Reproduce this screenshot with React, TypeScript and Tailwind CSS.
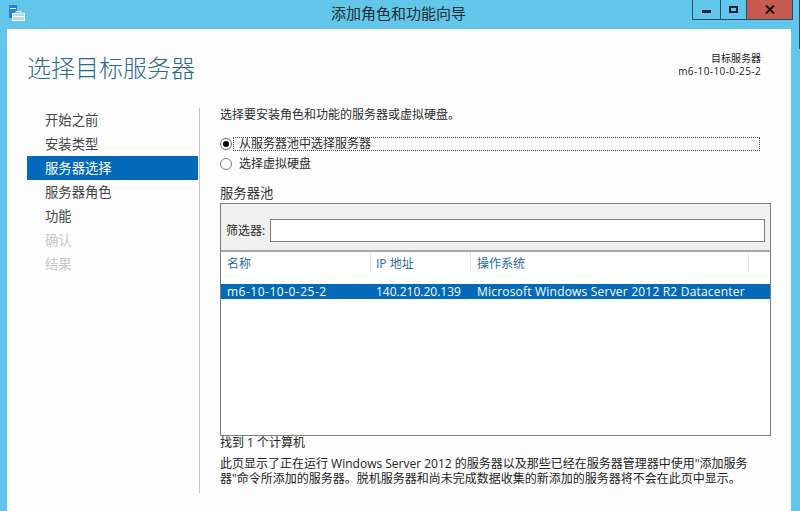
import React from 'react';

const font = { fontFamily: '"Open Sans", "Noto Sans CJK SC", sans-serif' };

const steps = [
  { label: '开始之前', state: 'normal' },
  { label: '安装类型', state: 'normal' },
  { label: '服务器选择', state: 'active' },
  { label: '服务器角色', state: 'normal' },
  { label: '功能', state: 'normal' },
  { label: '确认', state: 'disabled' },
  { label: '结果', state: 'disabled' },
];

const AppIcon = () => (
  <svg width="17" height="17" viewBox="0 0 17 17" fill="none" className="ml-[9px] mt-[5px]">
    <rect x="0.5" y="0.5" width="7" height="12" fill="#2a7fd0" stroke="#2a7fd0" />
    <rect x="1" y="3" width="6" height="1" fill="#e6f6fc" />
    <rect x="3.5" y="8.5" width="12" height="7" fill="#a9dcf0" stroke="#fff" />
    <path d="M7 8.5V6.5H12V8.5M4 11.5H15" stroke="#fff" />
  </svg>
);

const App: React.FC = () => {
  return (
    <div className="relative w-[800px] h-[511px] overflow-hidden bg-[#62c6ea] flex flex-col text-[12px] text-[#2b2b2b]" style={font}>
      <div className="absolute right-0 top-0 w-px h-[49px] bg-[#2a4f60]" />

      {/* title bar */}
      <div className="h-[29px] flex shrink-0">
        <div className="w-[331px]">
          <AppIcon />
        </div>
        <div className="w-[361px] pt-[3px] text-[15px] leading-[20px] text-[#1c2a30]">添加角色和功能向导</div>
        <div className="flex h-[20px] border border-t-0 border-[#1d4f66]">
          <div className="w-[28px] flex items-center justify-center border-r border-[#1d4f66]">
            <div className="w-[9px] h-[3px] bg-[#06222e] mt-[3px]" />
          </div>
          <div className="w-[26px] flex items-center justify-center border-r border-[#1d4f66]">
            <div className="w-[9px] h-[7px] border-2 border-[#06222e]" />
          </div>
          <div className="w-[45px] bg-[#c75a50] flex items-center justify-center">
            <svg width="10" height="9" viewBox="0 0 10 9">
              <path d="M1 0.5L9 8.5M9 0.5L1 8.5" stroke="#1e0d0b" strokeWidth="2" />
            </svg>
          </div>
        </div>
      </div>

      {/* client area */}
      <div className="flex-1 ml-[7px] mr-[9px] bg-[#fdfdfd] flex flex-col">
        <div className="h-[79px] flex justify-between shrink-0">
          <div className="pl-[20px] pt-[22px] text-[24px] leading-[34px] font-light text-[#2b6a8f]">选择目标服务器</div>
          <div className="pr-[30px] pt-[23px] text-right text-[10px] leading-[13px] text-[#222]">
            <div>目标服务器</div>
            <div className="tracking-[0.4px]">m6-10-10-0-25-2</div>
          </div>
        </div>

        <div className="flex flex-1">
          {/* steps */}
          <div className="w-[192px] shrink-0 pl-[20px] flex flex-col">
            {steps.map((step) => (
              <div
                key={step.label}
                className={
                  step.state === 'active'
                    ? 'h-[24px] w-[171px] pl-[18px] leading-[24px] text-[13.33px] bg-[#0369b8] text-white'
                    : step.state === 'disabled'
                      ? 'h-[24px] pl-[18px] leading-[24px] text-[13.33px] text-[#c8c8c8]'
                      : 'h-[24px] pl-[18px] leading-[24px] text-[13.33px] text-[#444]'
                }
              >
                {step.label}
              </div>
            ))}
          </div>

          {/* main */}
          <div className="w-[572px] mb-[18px] border-l border-[#c4c4c4] pl-[20px] flex flex-col">
            <div className="h-[13px] leading-[13px]">选择要安装角色和功能的服务器或虚拟硬盘。</div>

            <div className="mt-[16px] flex items-center h-[14px]">
              <span className="w-[12px] h-[12px] rounded-full border border-[#6a6a6a] bg-white flex items-center justify-center shrink-0">
                <span className="w-[6px] h-[6px] rounded-full bg-black" />
              </span>
              <div className="ml-[1px] w-[527px] h-[14px] pl-[5px] leading-[12px] border border-dotted border-[#444]">从服务器池中选择服务器</div>
            </div>
            <div className="mt-[6px] flex items-center h-[14px]">
              <span className="w-[12px] h-[12px] rounded-full border border-[#7a7a7a] bg-white shrink-0" />
              <div className="ml-[7px] leading-[14px]">选择虚拟硬盘</div>
            </div>

            <div className="mt-[13px] h-[19px] leading-[18px] text-[13.33px] text-[#333]">服务器池</div>

            <div className="w-[551px] h-[233px] border border-[#7d7d7d] bg-white flex flex-col">
              <div className="h-[48px] bg-[#f0f0f0] border-b-2 border-[#a8a8a8] flex items-start pt-[15px] pl-[5px] shrink-0">
                <span className="w-[44px] leading-[23px] text-[12px]">筛选器:</span>
                <div className="w-[495px] h-[23px] bg-white border border-[#7d7d7d]" />
              </div>
              <div className="h-[32px] flex text-[#2b6a9c] shrink-0">
                <div className="w-[150px] h-[20px] pl-[6px] leading-[24px] border-r border-[#e4e4e4]">名称</div>
                <div className="w-[100px] h-[20px] pl-[5px] leading-[24px] border-r border-[#e4e4e4]">IP 地址</div>
                <div className="w-[278px] h-[20px] pl-[6px] leading-[24px] border-r border-[#e4e4e4]">操作系统</div>
              </div>
              <div className="h-[15px] flex items-center bg-[#0369b8] text-white text-[12px] leading-[15px] whitespace-nowrap shrink-0">
                <div className="w-[150px] pl-[6px] tracking-[0.5px]">m6-10-10-0-25-2</div>
                <div className="w-[100px] pl-[5px]">140.210.20.139</div>
                <div className="pl-[6px] tracking-[0.2px]">Microsoft Windows Server 2012 R2 Datacenter</div>
              </div>
            </div>

            <div className="h-[14px] leading-[14px] text-[#222]">找到 1 个计算机</div>
            <div className="mt-[6px] leading-[15px] text-[#222] whitespace-nowrap">
              <div>此页显示了正在运行 Windows Server 2012 的服务器以及那些已经在服务器管理器中使用"添加服务</div>
              <div>器"命令所添加的服务器。脱机服务器和尚未完成数据收集的新添加的服务器将不会在此页中显示。</div>
            </div>
          </div>
        </div>
      </div>
    </div>
  );
};

export default App;
